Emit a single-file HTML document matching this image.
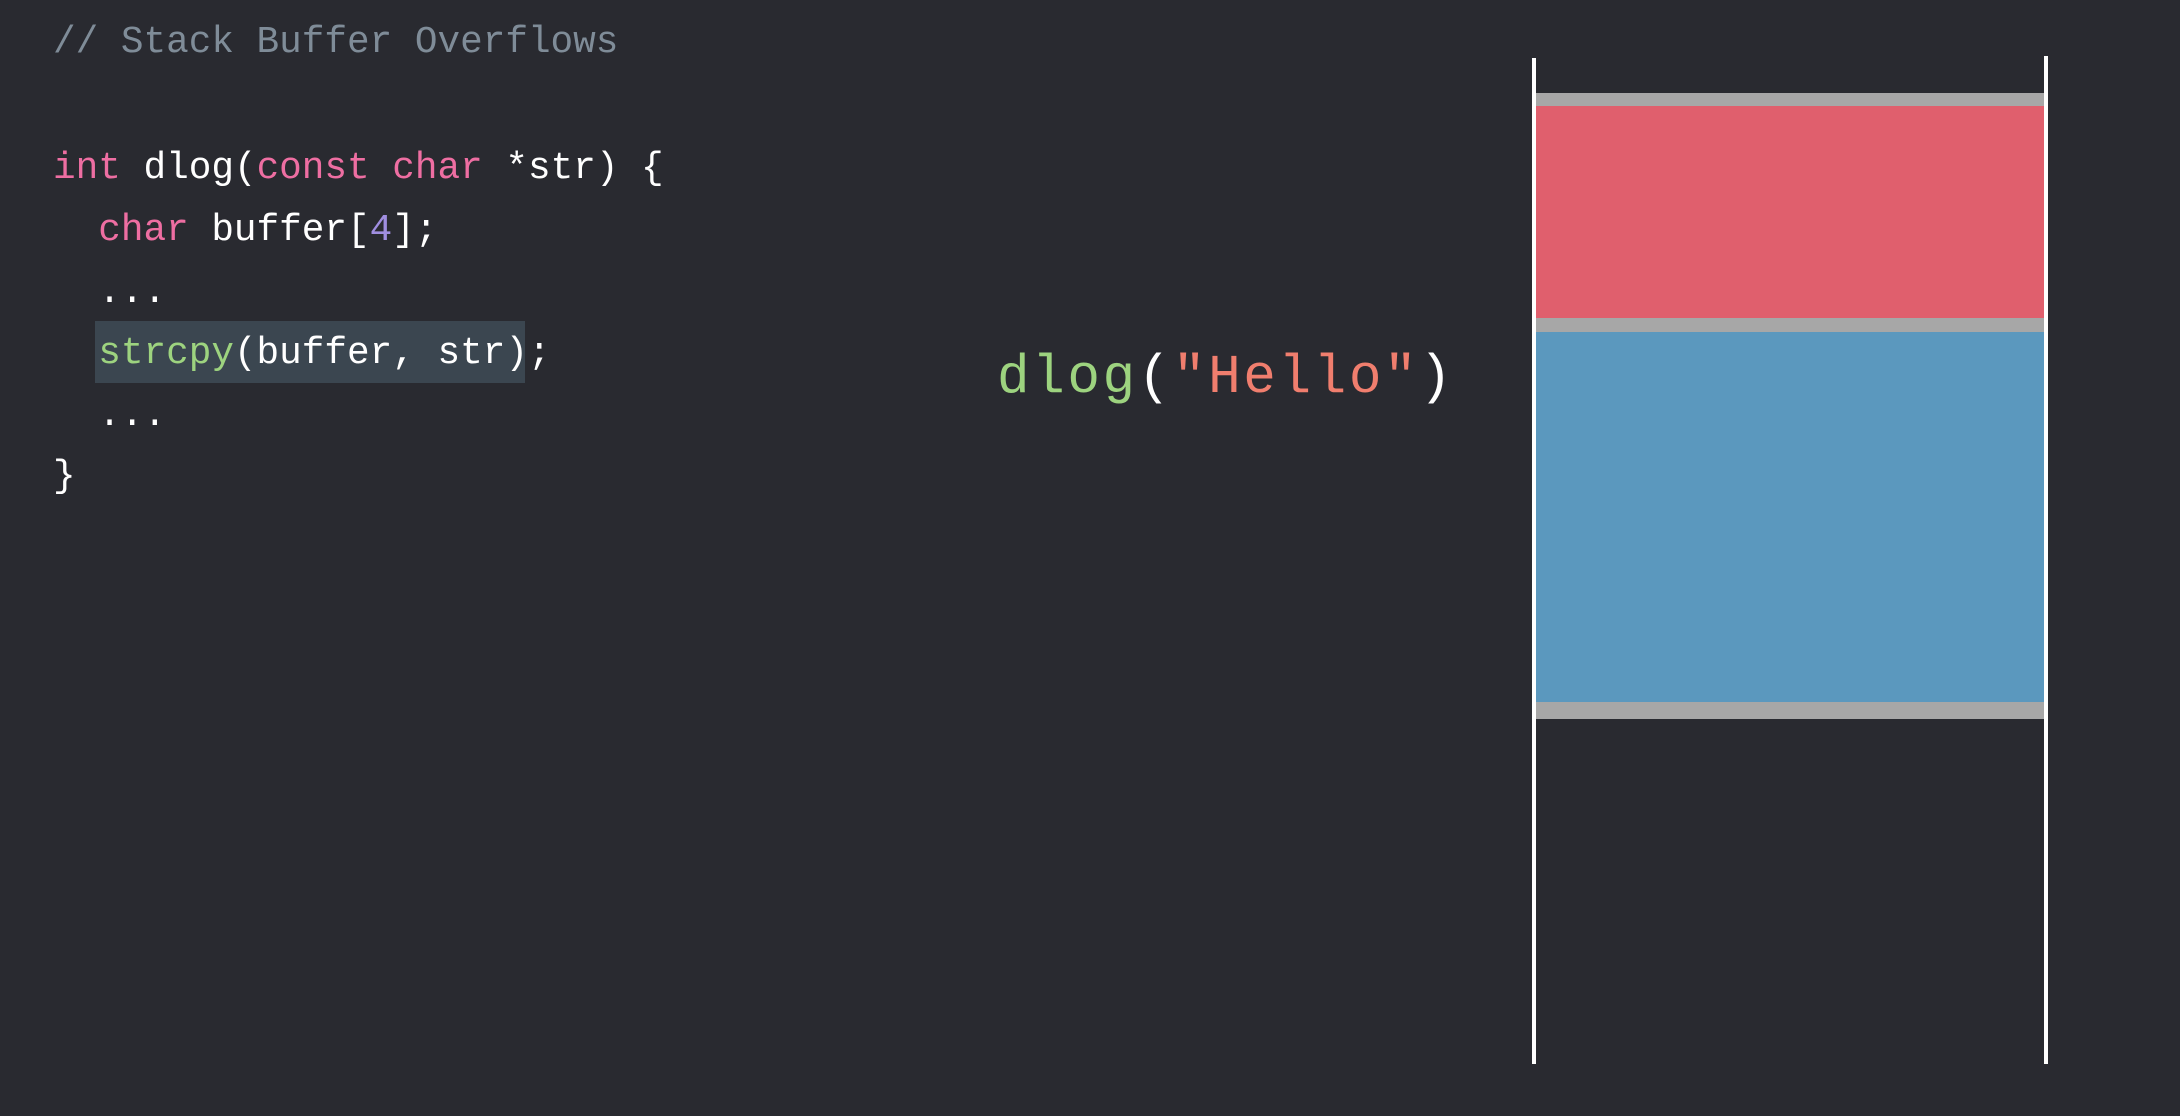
<!DOCTYPE html>
<html><head><style>
html,body{margin:0;padding:0;background:#292a30;width:2180px;height:1116px;overflow:hidden}
.l{position:absolute;font-family:"Liberation Mono",monospace;font-size:37.7px;line-height:1;white-space:pre;color:#fff}
.c{color:#7f8c98}.k{color:#ee6ea2}.n{color:#a08ee0}.g{color:#9dd37f}.s{color:#f07e6e}
.r{position:absolute}
</style></head><body>
<div class="l c" style="left:53px;top:25px">// Stack Buffer Overflows</div>
<div class="r" style="left:95px;top:321px;width:430px;height:62px;background:#3b4650"></div>
<div class="l" style="left:53px;top:151px"><span class="k">int</span> dlog(<span class="k">const char</span> *str) {</div>
<div class="l" style="left:53px;top:213px">  <span class="k">char</span> buffer[<span class="n">4</span>];</div>
<div class="l" style="left:53px;top:275px">  ...</div>
<div class="l" style="left:53px;top:336px">  <span class="g">strcpy</span>(buffer, str);</div>
<div class="l" style="left:53px;top:398px">  ...</div>
<div class="l" style="left:53px;top:459px">}</div>
<div class="l" style="left:997px;top:352px;font-size:54.3px;letter-spacing:2.6px"><span class="g">dlog</span>(<span class="s">"Hello"</span>)</div>
<div class="r" style="left:1532px;top:58px;width:4px;height:1006px;background:#fff"></div>
<div class="r" style="left:2044px;top:56px;width:4px;height:1008px;background:#fff"></div>
<div class="r" style="left:1536px;top:93px;width:508px;height:13px;background:#a7a7a7"></div>
<div class="r" style="left:1536px;top:106px;width:508px;height:212px;background:#e05f6d"></div>
<div class="r" style="left:1536px;top:318px;width:508px;height:14px;background:#a7a7a7"></div>
<div class="r" style="left:1536px;top:332px;width:508px;height:370px;background:#5b98be"></div>
<div class="r" style="left:1536px;top:702px;width:508px;height:17px;background:#a7a7a7"></div>
</body></html>
